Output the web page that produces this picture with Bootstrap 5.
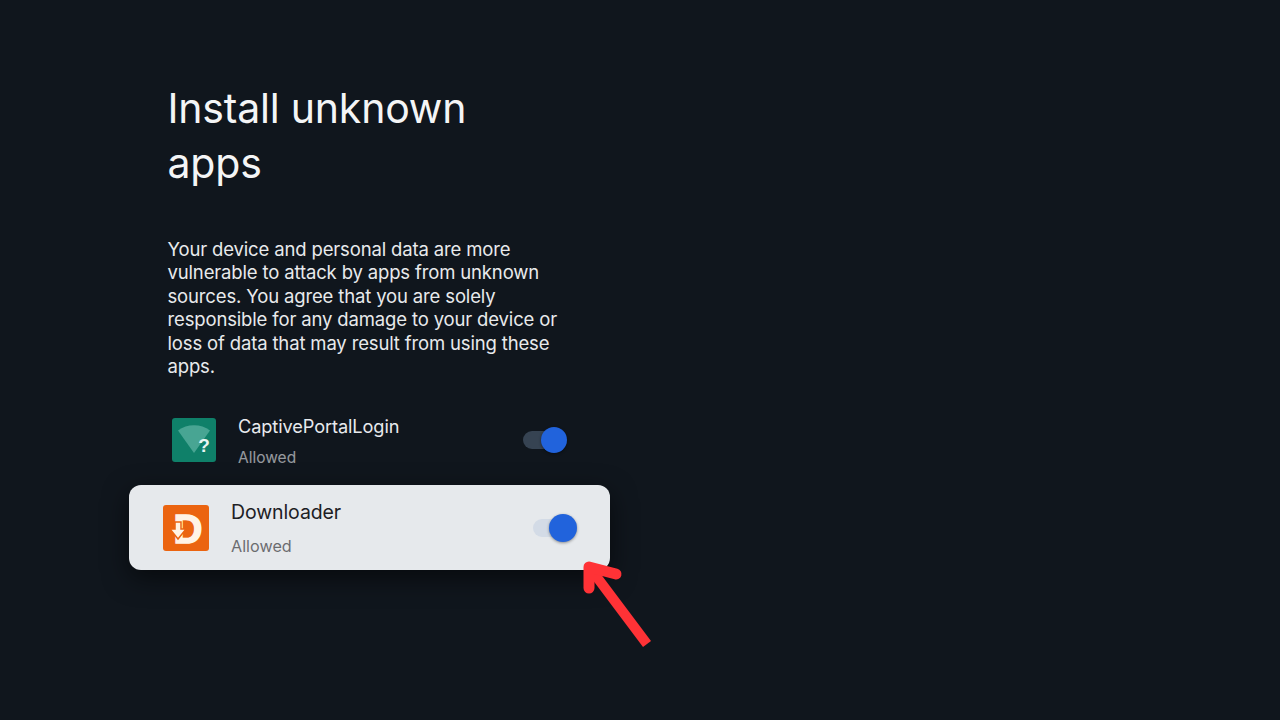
<!doctype html>
<html lang="en"><head><meta charset="utf-8"><title>Install unknown apps</title>
<link rel="stylesheet" href="https://cdn.jsdelivr.net/npm/bootstrap@5.3.0/dist/css/bootstrap.min.css">
<style>
html,body{height:720px;overflow:hidden}
body{background:#10161d;font-family:Inter,"Open Sans",sans-serif;color:#eef0f2;position:relative}
.settings-pane{width:481px;margin-left:129px;padding-top:81px}
.pane-title{font-family:Inter,sans-serif;font-weight:400;font-size:41px;line-height:54.500px;margin:0 0 0 38.500px;width:340px;color:#f4f5f6;letter-spacing:-.2px}
.pane-desc{font-size:18.500px;line-height:23.600px;margin:47.500px 0 0 38.500px;width:400px;color:#e8eaec;letter-spacing:-.15px}
.app-plain{height:76px;margin-top:23px;padding:0 43px;color:#e8eaed}
.app-focus{height:85px;margin-top:7px;padding:0 33px 0 34px;background:#e6e9ec;border-radius:12px;color:#1d2024;box-shadow:0 8px 26px rgba(0,0,0,.55)}
.app-text{margin-left:22px}
.app-name{font-size:18.200px;line-height:24px;letter-spacing:-.1px;margin-top:2px}
.app-state{font-size:15.500px;line-height:20px;margin-top:10px;opacity:.62}
.app-focus .app-name{font-size:19.500px;margin-top:1px}
.app-focus .app-state{font-size:16.200px;margin-top:12px}
.app-ico{flex:none;display:block;overflow:visible}
.tv-toggle{width:45px;height:26px;position:relative;flex:none}
.tv-track{position:absolute;left:1px;top:4px;width:35px;height:18px;border-radius:9px;background:#364352}
.tv-knob{position:absolute;right:0;top:0;width:26px;height:26px;border-radius:50%;background:#2163dc;box-shadow:0 1px 3px rgba(0,0,0,.4)}
.app-focus .tv-track{background:#d3dbe6}
.app-focus .tv-knob{width:28px;height:28px;top:-1px}
.pointer-arrow{position:absolute;left:575px;top:553px}
.logo-font{font-family:"Liberation Sans",sans-serif;font-weight:700}
</style></head>
<body>
<main class="settings-pane">
<h1 class="pane-title">Install unknown apps</h1>
<p class="pane-desc">Your device and personal data are more vulnerable to attack by apps from unknown sources. You agree that you are solely responsible for any damage to your device or loss of data that may result from using these apps.</p>
<div class="app-plain d-flex align-items-center">
<svg class="app-ico" width="44" height="44" viewBox="0 0 44 44"><rect width="44" height="44" rx="3" fill="#0f8069"/><path d="M6 12.500C15 5.500 29 5.500 38 12.500L22 35Z" fill="#48a593"/><text x="32" y="34" text-anchor="middle" class="logo-font" font-size="19" fill="#e9f5f2">?</text></svg>
<div class="app-text flex-grow-1"><div class="app-name">CaptivePortalLogin</div><div class="app-state">Allowed</div></div>
<div class="tv-toggle"><span class="tv-track"></span><span class="tv-knob"></span></div>
</div>
<div class="app-focus d-flex align-items-center">
<svg class="app-ico" width="46" height="46" viewBox="0 0 46 46"><rect width="46" height="46" rx="3" fill="#eb6410"/><text x="25" y="38" text-anchor="middle" class="logo-font" font-size="40" fill="#fff3e6" stroke="#fff3e6" stroke-width="1.500">D</text><path d="M7 24h5v-7h6v7h5l-8 10z" fill="#fff3e6" stroke="#eb6410" stroke-width="1.500"/></svg>
<div class="app-text flex-grow-1"><div class="app-name">Downloader</div><div class="app-state">Allowed</div></div>
<div class="tv-toggle"><span class="tv-track"></span><span class="tv-knob"></span></div>
</div>
</main>
<svg class="pointer-arrow" width="85" height="100" viewBox="0 0 85 100" fill="none" stroke="#ff3236" stroke-linecap="round" stroke-linejoin="round"><path d="M15 15 72 91" stroke-width="10" stroke-linecap="butt"/><path d="M14 35 14 14 41 21" stroke-width="11"/></svg>
<script src="https://cdn.jsdelivr.net/npm/bootstrap@5.3.0/dist/js/bootstrap.bundle.min.js"></script>
</body></html>
